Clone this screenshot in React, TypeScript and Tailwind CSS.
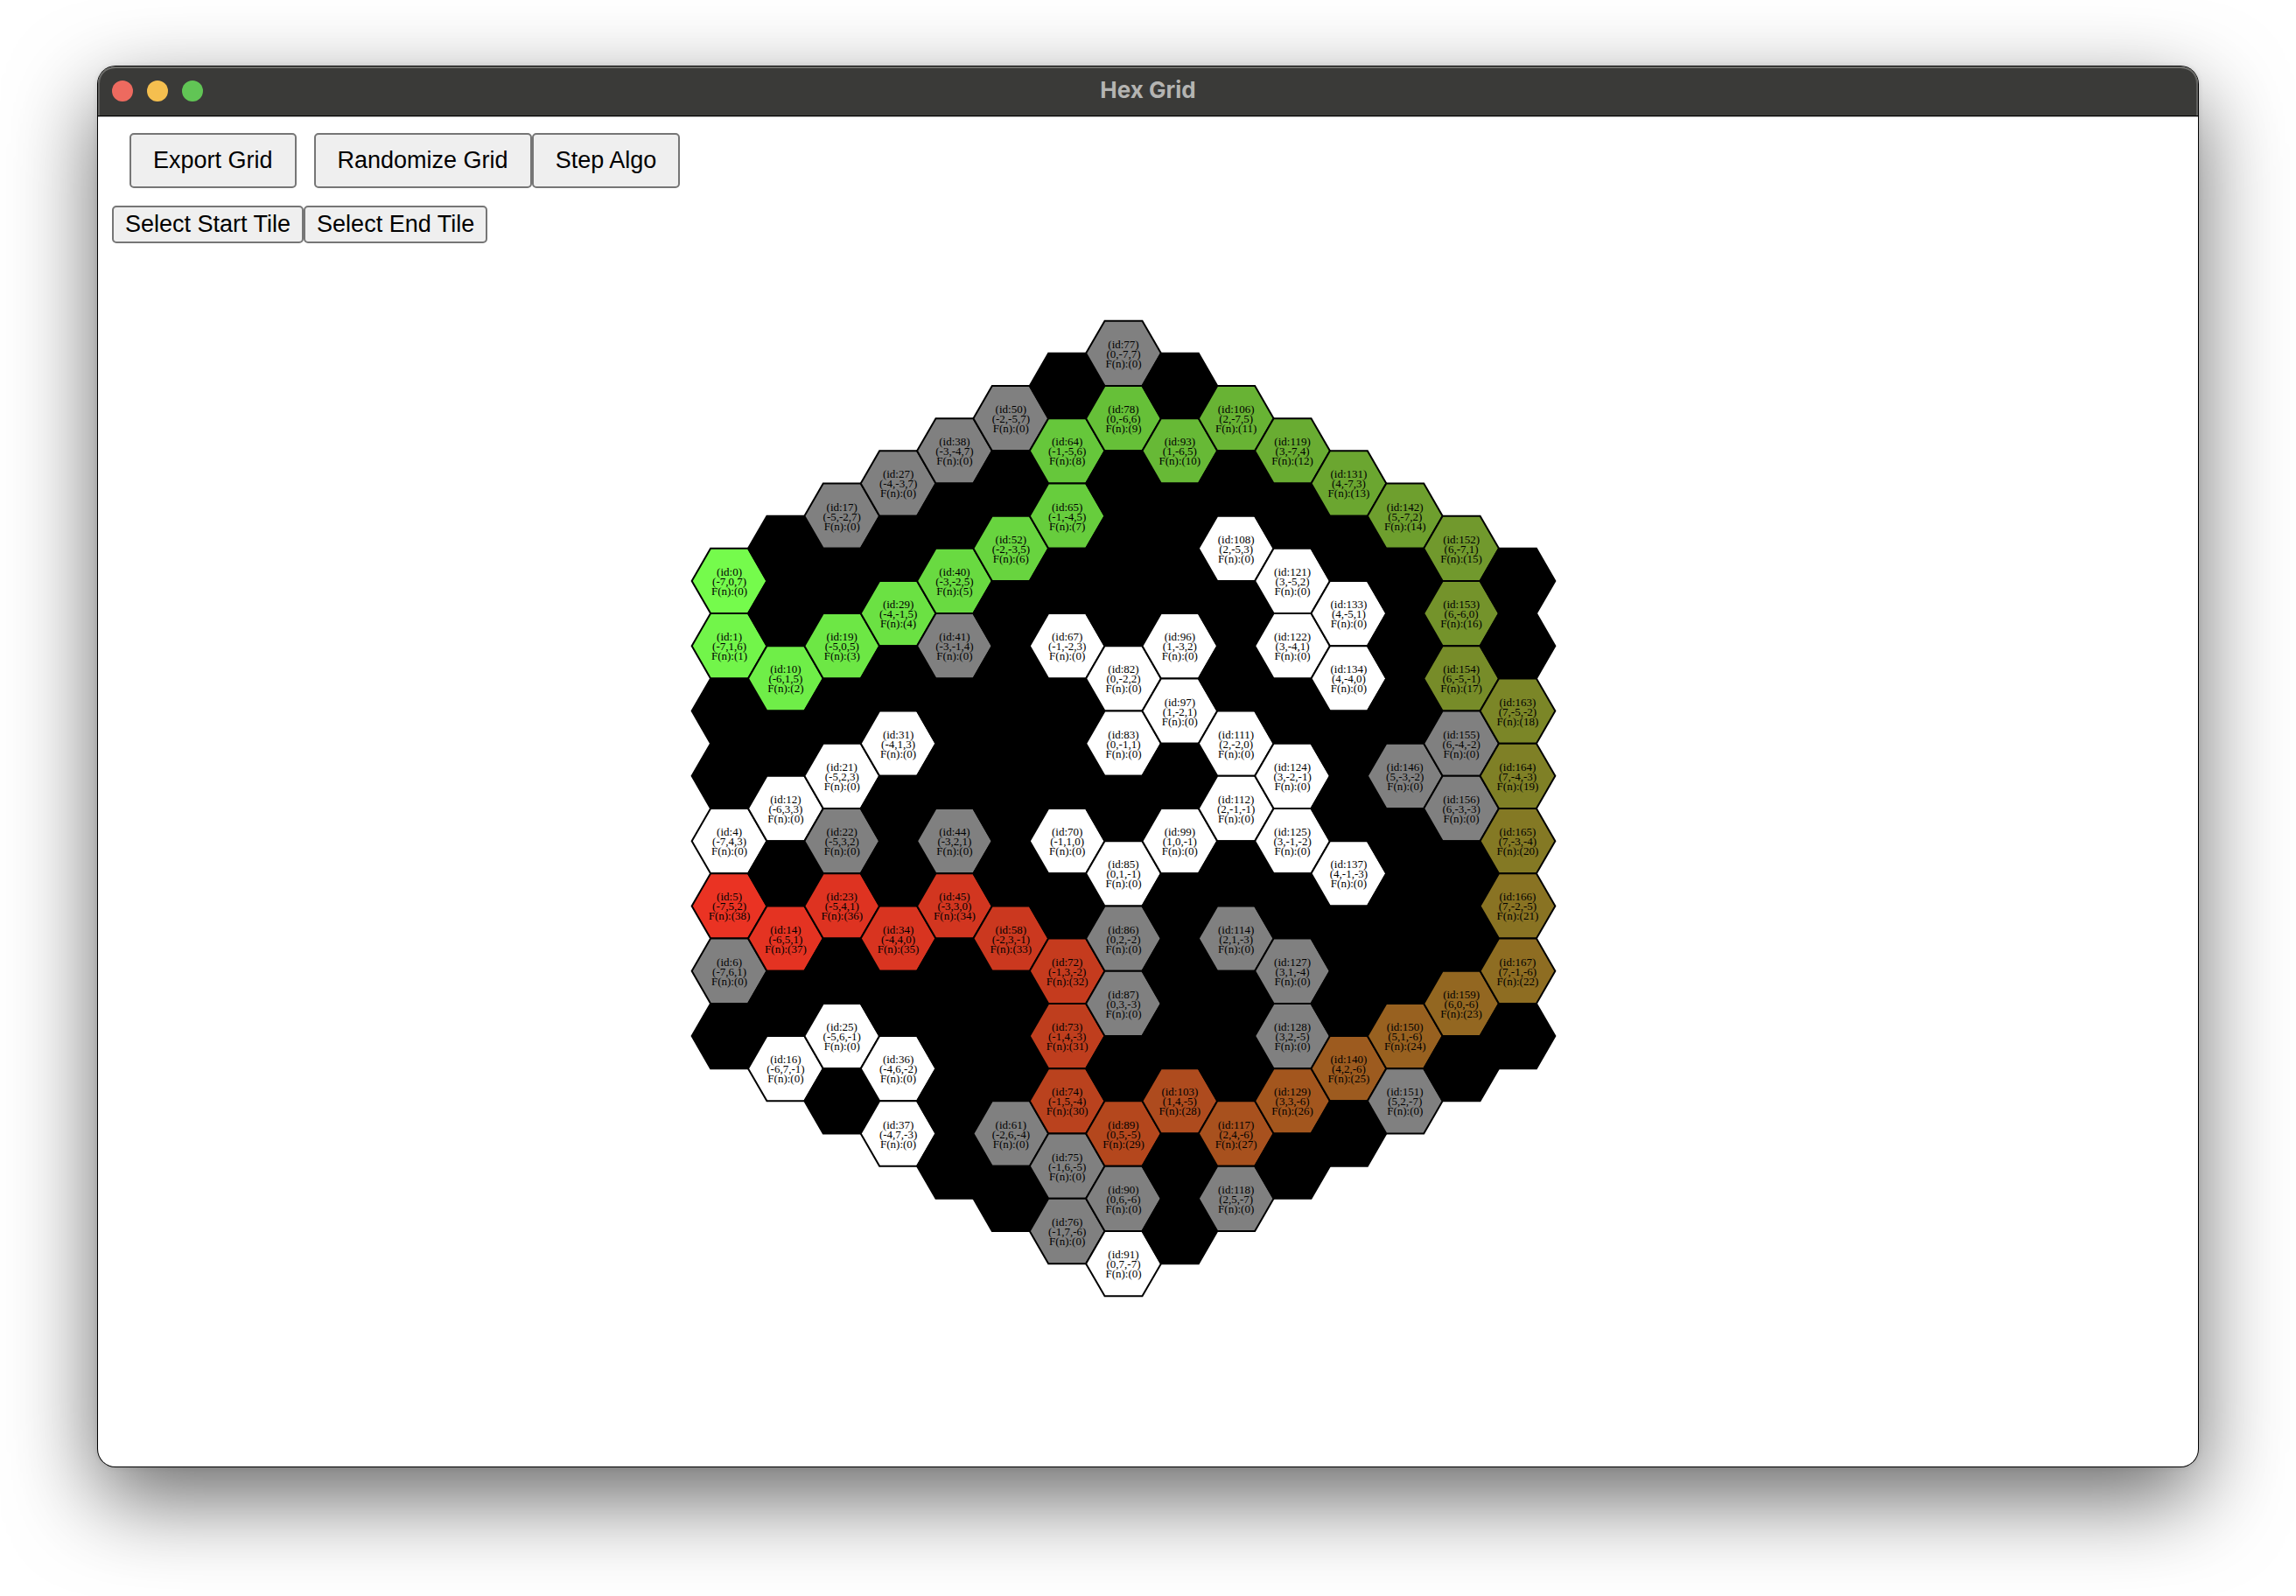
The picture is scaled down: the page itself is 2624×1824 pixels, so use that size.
const RADIUS = 7;
const HEX_SIZE = 42.9;
const ROW = HEX_SIZE * Math.sqrt(3);

const PATH = [
  0, 1, 10, 19, 29, 40, 52, 65, 64, 78, 93, 106, 119, 131, 142, 152, 153, 154, 163, 164, 165, 166, 167, 159, 150, 140,
  129, 117, 103, 89, 74, 73, 72, 58, 45, 34, 23, 14, 5,
];
const VISITED = new Set([
  77, 50, 38, 27, 17, 41, 22, 44, 6, 61, 75, 76, 90, 118, 151, 128, 127, 114, 86, 87, 146, 155, 156,
]);
const OPEN = new Set([
  108, 121, 133, 122, 134, 67, 82, 96, 97, 83, 111, 124, 112, 99, 125, 137, 70, 85, 31, 21, 12, 4, 25, 36, 16, 37, 91,
]);

type Tile = { id: number; q: number; r: number; s: number };

function buildTiles(): Tile[] {
  const tiles: Tile[] = [];
  for (let q = -RADIUS; q <= RADIUS; q++) {
    const first = Math.max(-RADIUS, -q - RADIUS);
    const last = Math.min(RADIUS, -q + RADIUS);
    for (let r = first; r <= last; r++) {
      tiles.push({ id: tiles.length, q, r, s: 0 - q - r });
    }
  }
  return tiles;
}

const decode = (v: number) => (v <= 0.04045 ? v / 12.92 : ((v + 0.055) / 1.055) ** 2.4);
const encode = (v: number) => Math.round(255 * (v <= 0.0031308 ? v * 12.92 : 1.055 * v ** (1 / 2.4) - 0.055));

// Green to red ramp, softened through the wide-gamut primaries.
function rampColor(step: number): string {
  const t = step / (PATH.length - 1);
  const r = decode(t);
  const g = decode(1 - t);
  return `rgb(${encode(0.8225 * r + 0.1774 * g)}, ${encode(0.0332 * r + 0.9669 * g)}, ${encode(0.0171 * r + 0.0724 * g)})`;
}

const TILES = buildTiles();
const POINTS = Array.from({ length: 6 }, (_, i) => {
  const a = (Math.PI / 3) * i;
  return `${(HEX_SIZE * Math.cos(a)).toFixed(2)},${(HEX_SIZE * Math.sin(a)).toFixed(2)}`;
}).join(" ");

function HexTile({ tile }: { tile: Tile }) {
  const step = PATH.indexOf(tile.id);
  const onPath = step >= 0;
  const open = onPath || VISITED.has(tile.id) || OPEN.has(tile.id);
  const fill = onPath ? rampColor(step) : VISITED.has(tile.id) ? "#808080" : open ? "#ffffff" : "#000000";
  const x = tile.q * HEX_SIZE * 1.5;
  const y = (tile.r + tile.q / 2) * ROW;
  return (
    <g transform={`translate(${x.toFixed(2)} ${y.toFixed(2)})`}>
      <polygon points={POINTS} fill={fill} stroke="#000000" strokeWidth={2} />
      {open && (
        <text textAnchor="middle" fill="#000000">
          <tspan x="0" y="-6">{`(id:${tile.id})`}</tspan>
          <tspan x="0" y="5">{`(${tile.q},${tile.r},${tile.s})`}</tspan>
          <tspan x="0" y="16">{`F(n):(${onPath ? step : 0})`}</tspan>
        </text>
      )}
    </g>
  );
}

const buttonBase =
  "rounded-[5px] border-2 border-[#767676] bg-[#efefef] text-[27px] leading-[31px] text-black whitespace-nowrap";

export default function App() {
  return (
    <div className="min-h-screen bg-white px-28 pt-19 pb-37">
      <main className="flex min-h-[1600px] flex-col rounded-[20px] bg-white font-['Liberation_Sans',Arial,sans-serif] shadow-[0_0_0_1px_#000,0_36px_100px_rgba(0,0,0,0.6),0_0_6px_rgba(0,0,0,0.15)]">
        <header className="grid h-[57px] grid-cols-[1fr_auto_1fr] items-center rounded-t-[20px] border-b border-black bg-[#3a3a38] px-4 shadow-[inset_0_2px_0_#6f6f6c,inset_2px_0_0_#626260,inset_-2px_0_0_#626260]">
          <div className="flex gap-4">
            <button type="button" aria-label="Close" className="size-6 rounded-full bg-[#ed6a5f]" />
            <button type="button" aria-label="Minimize" className="size-6 rounded-full bg-[#f5bf4f]" />
            <button type="button" aria-label="Zoom" className="size-6 rounded-full bg-[#61c555]" />
          </div>
          <h1 className="pb-0.5 font-['Inter',sans-serif] text-[26px] leading-8 font-bold text-[#b4b4b2]">Hex Grid</h1>
        </header>
        <div className="flex border-t border-[#bdbdbd] px-4 pt-[18px]">
          <button type="button" className={`${buttonBase} mr-5 ml-5 px-[25px] py-[14px]`}>Export Grid</button>
          <button type="button" className={`${buttonBase} px-[25px] py-[14px]`}>Randomize Grid</button>
          <button type="button" className={`${buttonBase} px-[25px] py-[14px]`}>Step Algo</button>
        </div>
        <div className="flex px-4 pt-5">
          <button type="button" className={`${buttonBase} px-[13px] py-[4px]`}>Select Start Tile</button>
          <button type="button" className={`${buttonBase} px-[13px] py-[4px]`}>Select End Tile</button>
        </div>
        <div className="flex justify-center pt-[86px] pr-14">
          <svg
            viewBox="-496 -560 992 1120"
            role="img"
            aria-label="Hex grid path"
            className="w-[992px] max-w-full font-['Liberation_Serif','Times_New_Roman',serif] text-[13px]"
          >
            {TILES.map((tile) => (
              <HexTile key={tile.id} tile={tile} />
            ))}
          </svg>
        </div>
      </main>
    </div>
  );
}
